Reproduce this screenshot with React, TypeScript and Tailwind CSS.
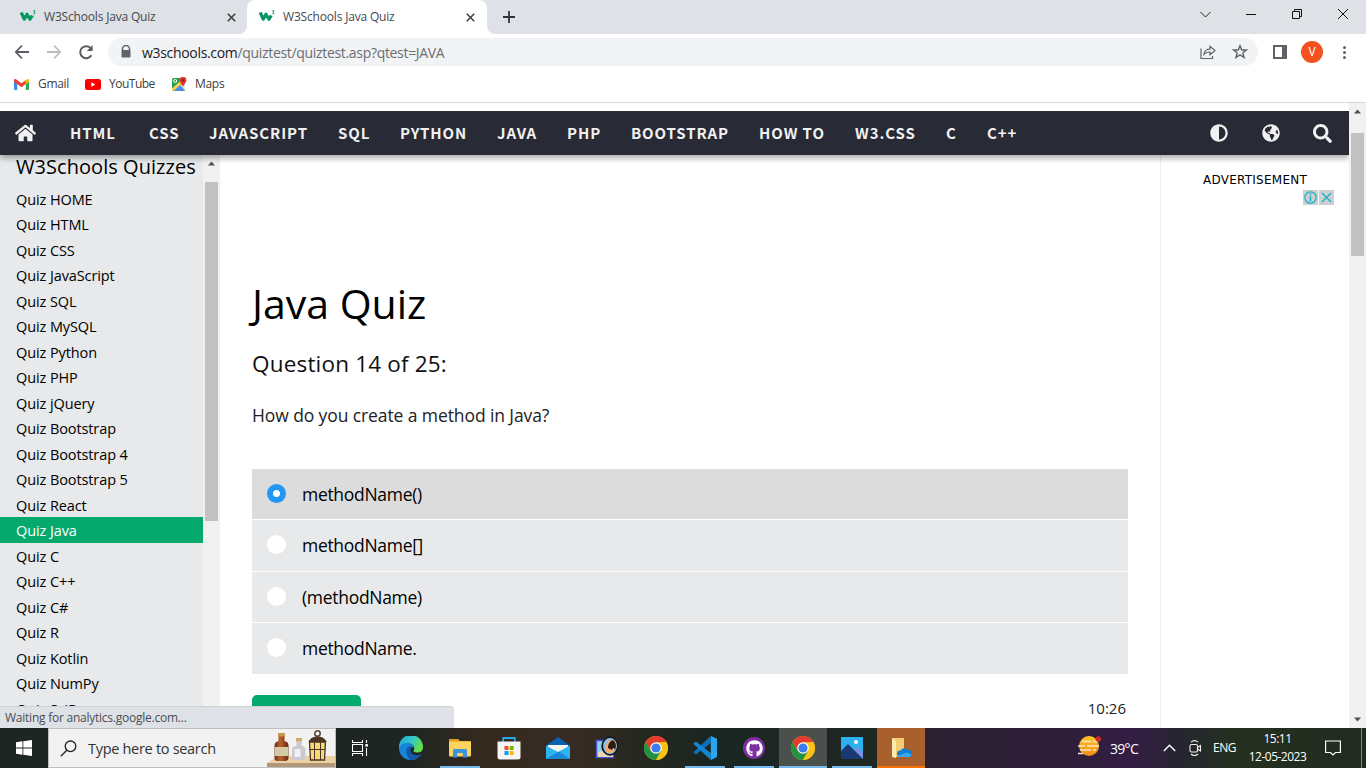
import React from "react";
import { FaHome, FaAdjust, FaGlobeAmericas, FaSearch, FaGithub } from "react-icons/fa";

const NAV: [string, string][] = [
  ["HTML", "w-[79px]"],
  ["CSS", "w-[60px]"],
  ["JAVASCRIPT", "w-[129px]"],
  ["SQL", "w-[62px]"],
  ["PYTHON", "w-[97px]"],
  ["JAVA", "w-[70px]"],
  ["PHP", "w-[64px]"],
  ["BOOTSTRAP", "w-[128px]"],
  ["HOW TO", "w-[96px]"],
  ["W3.CSS", "w-[91px]"],
  ["C", "w-[41px]"],
  ["C++", "w-[40px]"],
];

const QUIZZES = [
  "HOME", "HTML", "CSS", "JavaScript", "SQL", "MySQL", "Python", "PHP", "jQuery", "Bootstrap",
  "Bootstrap 4", "Bootstrap 5", "React", "Java", "C", "C++", "C#", "R", "Kotlin", "NumPy", "SciPy",
];

const OPTIONS: [string, string][] = [
  ["methodName()", "h-[50px] bg-[#dcdcdc]"],
  ["methodName[]", "h-[51px] bg-[#e7e9eb]"],
  ["(methodName)", "h-[50px] bg-[#e7e9eb]"],
  ["methodName.", "h-[51px] bg-[#e7e9eb]"],
];

function W3Logo() {
  return (
    <svg className="h-4 w-4 shrink-0" viewBox="0 0 16 16" fill="none" stroke="#059862">
      <path d="M1.2 3.5 4.2 10.200 7 5.200 10 10.200 12.300 6.500" strokeWidth="3.200" strokeLinejoin="round" />
      <path d="M13.200 1.800H15L14 3.200C15.600 3.200 15.500 5.300 13.200 4.900" strokeWidth=".9" />
    </svg>
  );
}

function Close() {
  return (
    <svg className="h-[9px] w-[9px] shrink-0" viewBox="0 0 9 9" stroke="#3c4043" strokeWidth="1.6">
      <path d="M.8.8 8.2 8.2M8.2.8.8 8.2" />
    </svg>
  );
}

function Tab({ active }: { active?: boolean }) {
  return (
    <div
      className={`flex h-[34px] items-center ${
        active ? "w-[240px] rounded-t-lg bg-white pl-3" : "w-[247px] rounded-br-lg bg-[#dee1e6] pl-5"
      }`}
    >
      <W3Logo />
      <span className="ml-2 w-[183px] text-[12px] tracking-[-0.18px] text-[#45494d]">W3Schools Java Quiz</span>
      <Close />
    </div>
  );
}

function TabStrip() {
  return (
    <div className="flex h-[34px] bg-white">
      <Tab />
      <div className="bg-[linear-gradient(#dee1e6_50%,#fff_50%)]">
        <Tab active />
      </div>
      <div className="flex flex-1 items-center rounded-bl-lg bg-[#dee1e6] pl-[15px]">
        <svg className="h-[14px] w-[14px]" viewBox="0 0 14 14" stroke="#303438" strokeWidth="1.8">
          <path d="M7 1v12M1 7h12" />
        </svg>
        <div className="ml-auto flex items-center pb-[6px]">
          <svg className="mr-[35px] h-3 w-[11px]" viewBox="0 0 11 12" fill="none" stroke="#222">
            <path d="M.5 4 5.5 9 10.5 4" />
          </svg>
          <svg className="mr-[36px] h-3 w-[10px]" viewBox="0 0 10 12" stroke="#111">
            <path d="M0 6.5H10" />
          </svg>
          <svg className="mr-[36px] h-3 w-[10px]" viewBox="0 0 10 12" fill="none" stroke="#111">
            <path d="M.5 3.5h7v7h-7zM2.5 3.5v-2h7v7h-2" />
          </svg>
          <svg className="mr-[18px] h-3 w-[10px]" viewBox="0 0 10 12" stroke="#111">
            <path d="M0 1 10 11M10 1 0 11" />
          </svg>
        </div>
      </div>
    </div>
  );
}

function Toolbar() {
  return (
    <div className="flex h-9 items-center bg-white pl-[14px]">
      <svg className="h-4 w-4" viewBox="0 0 16 16" fill="none" stroke="#5a5e63" strokeWidth="1.8">
        <path d="M15 8H2M8 1.5 1.8 8 8 14.5" />
      </svg>
      <svg className="ml-4 h-4 w-4" viewBox="0 0 16 16" fill="none" stroke="#babcbe" strokeWidth="1.8">
        <path d="M1 8H14M8 1.5 14.2 8 8 14.5" />
      </svg>
      <svg className="ml-4 h-4 w-4" viewBox="0 0 16 16" fill="none" stroke="#5a5e63" strokeWidth="2">
        <path d="M13.4 11.2A6 6 0 1 1 12.4 3.9L14 5.6" />
        <path d="M14.6 1v6H8.8z" fill="#5a5e63" stroke="none" />
      </svg>
      <div className="ml-[14px] flex h-7 w-[1150px] items-center rounded-full bg-[#f1f3f4] pl-3">
        <svg className="h-[14px] w-[12px]" viewBox="0 0 12 14">
          <path d="M2.500 6V4a3.500 3.500 0 0 1 7 0v2" fill="none" stroke="#5f6368" strokeWidth="1.500" />
          <rect x="1.500" y="5" width="9" height="7.500" rx="1" fill="#5f6368" />
        </svg>
        <span className="ml-[10px] text-[14px] tracking-[-0.32px] text-[#6a6e73]">
          <span className="text-[#202124]">w3schools.com</span>/quiztest/quiztest.asp?qtest=JAVA
        </span>
        <svg className="ml-auto h-4 w-4" viewBox="0 0 16 16" fill="none" stroke="#5f6368" strokeWidth="1.200">
          <path d="M1 4.500v10h11.500V12M4 10.500C4 7 7 5.200 10 5.200V2.200L15 6.500 10 10.700V8C7.500 8 5.500 8.500 4 10.500z" />
        </svg>
        <svg className="mr-[10px] ml-4 h-4 w-4" viewBox="0 0 16 16" fill="none" stroke="#5f6368" strokeWidth="1.400">
          <path d="M8 1.800 9.700 6H14.400L10.800 8.900 12.100 13.500 8 10.900 3.900 13.500 5.200 8.900 1.600 6H6.300z" />
        </svg>
      </div>
      <svg className="ml-[15px] h-[14px] w-[14px]" viewBox="0 0 14 14">
        <path d="M1 1h12v12H1z" fill="#fff" stroke="#5f6368" strokeWidth="2" />
        <path d="M9 0h5v14H9z" fill="#5f6368" />
      </svg>
      <div className="ml-[14px] flex h-[22px] w-[22px] items-center justify-center rounded-full bg-[#f4511e] text-[12px] font-medium text-white">
        V
      </div>
      <div className="ml-5 flex flex-col gap-[2px]">
        <i className="h-[3px] w-[3px] rounded-full bg-[#5f6368]" />
        <i className="h-[3px] w-[3px] rounded-full bg-[#5f6368]" />
        <i className="h-[3px] w-[3px] rounded-full bg-[#5f6368]" />
      </div>
    </div>
  );
}

function Bookmarks() {
  return (
    <div className="flex h-[33px] items-center border-b border-[#d5d7da] bg-white pb-1 pl-[14px] text-[12px] text-[#3c4043]">
      <svg className="h-[11px] w-[15px]" viewBox="0 0 15 11">
        <path d="M0 1.500 3.200 4v7H1a1 1 0 0 1-1-1z" fill="#4285f4" />
        <path d="M15 1.500 11.800 4v7H14a1 1 0 0 0 1-1z" fill="#34a853" />
        <path d="M0 2.800V1.200C0 0 1.400-.4 2.400.4L7.500 4.200 11.800 1V5L7.500 8.200z" fill="#ea4335" />
        <path d="M15 2.800V1.200C15 0 13.600-.4 12.600.4L11.800 1v4z" fill="#fbbc04" />
      </svg>
      <span className="ml-[9px] w-[40px] tracking-[-0.3px]">Gmail</span>
      <svg className="ml-[7px] h-[11px] w-[16px]" viewBox="0 0 16 11">
        <rect width="16" height="11" rx="2.500" fill="#f00" />
        <path d="M6.300 3.200v4.600L10.400 5.500z" fill="#fff" />
      </svg>
      <span className="ml-[8px] w-[56px] tracking-[-0.5px]">YouTube</span>
      <svg className="ml-[7px] h-[15px] w-[15px]" viewBox="0 0 15 15">
        <rect y="1" width="13" height="13" rx="1.500" fill="#2ba14b" />
        <path d="M1 14 8 7.500 13 13.500z" fill="#4a8af4" />
        <path d="M0 11.500 9 3.500 11 5.500 1.500 14H0z" fill="#fbd04b" />
        <path d="M8 8 13 13.500V7z" fill="#e4e6e8" />
        <circle cx="3.200" cy="4" r="1.500" fill="none" stroke="#fff" />
        <path d="M7.600 3.200a3.400 3.400 0 0 1 6.800 0C14.400 6 11.500 7 11 10.500 10.500 7 7.600 6 7.600 3.200z" fill="#e2382c" />
        <circle cx="11" cy="3.200" r="1.200" fill="#8d201a" />
      </svg>
      <span className="ml-[8px] tracking-[-0.3px]">Maps</span>
    </div>
  );
}

function Arrow({ down }: { down?: boolean }) {
  return (
    <svg className="h-[5px] w-[7px]" viewBox="0 0 7 5" fill="#505050">
      <path d={down ? "M0 .5H7L3.500 4.500z" : "M0 4.500H7L3.500.5z"} />
    </svg>
  );
}

function SiteNav() {
  return (
    <nav className="relative z-10 flex h-[44px] shrink-0 items-center bg-[#282a35] text-[#f1f1f1] shadow-[0_3px_6px_rgba(0,0,0,0.35)] [clip-path:inset(0_0_-12px_0)]">
      <FaHome className="ml-[15px] h-[22px] w-[21px]" />
      <div className="ml-[34px] flex font-['Noto_Sans_CJK_SC',sans-serif] text-[15px] leading-[44px] font-bold tracking-[0.9px] whitespace-nowrap">
        {NAV.map(([label, w]) => (
          <span key={label} className={w}>
            {label}
          </span>
        ))}
      </div>
      <FaAdjust className="ml-auto h-[18px] w-[18px]" />
      <FaGlobeAmericas className="ml-[34px] h-[18px] w-[18px]" />
      <FaSearch className="mr-[17px] ml-[33px] h-[19px] w-[19px]" />
    </nav>
  );
}

function Sidebar() {
  return (
    <>
      <aside className="w-[203px] shrink-0 overflow-hidden bg-[#e7e9eb] text-black">
        <h2 className="h-[30.500px] pl-4 text-[20px] leading-[23px] tracking-[0.05px] whitespace-nowrap">W3Schools Quizzes</h2>
        {QUIZZES.map((q) => (
          <div
            key={q}
            className={`h-[25.500px] pl-4 text-[14.500px] leading-[27px] tracking-[-0.1px] whitespace-nowrap ${
              q === "Java" ? "bg-[#04aa6d] text-white" : ""
            }`}
          >
            Quiz {q}
          </div>
        ))}
      </aside>
      <div className="flex w-[17px] shrink-0 flex-col items-center bg-[#f1f1f1] pt-[6px]">
        <Arrow />
        <div className="mt-[16px] h-[339px] w-[13px] bg-[#c1c1c1]" />
      </div>
    </>
  );
}

function Quiz() {
  return (
    <main className="w-[940px] shrink-0 overflow-hidden px-8 pt-[116px] text-black">
      <h1 className="h-[66px] text-[41px] leading-[65px] tracking-[0px]">Java Quiz</h1>
      <h3 className="mt-[9px] h-[36px] text-[22.500px] leading-[35px] tracking-[0.18px] text-[#111]">Question 14 of 25:</h3>
      <p className="mt-[19px] h-[28px] text-[17.500px] leading-[28px] tracking-[-0.1px] text-[#222]">How do you create a method in Java?</p>
      <div className="mt-[40px] flex flex-col gap-px">
        {OPTIONS.map(([text, style], i) => (
          <label key={text} className={`flex items-center pl-[15px] text-[17.500px] ${style}`}>
            <span
              className={`mb-[2px] flex h-[19px] w-[19px] items-center justify-center rounded-full ${
                i === 0 ? "bg-[#2196f3]" : "bg-white"
              }`}
            >
              <i className="h-[7px] w-[7px] rounded-full bg-white" />
            </span>
            <span className="ml-4 tracking-[-0.3px]">{text}</span>
          </label>
        ))}
      </div>
      <div className="mt-[21px] flex items-start justify-between">
        <button className="h-[40px] w-[109px] rounded-[5px] bg-[#04aa6d]" aria-label="Next" />
        <span className="mr-[2px] text-[15px] leading-[27px] tracking-[0px] text-[#222]">10:26</span>
      </div>
    </main>
  );
}

function AdColumn() {
  return (
    <aside className="flex flex-1 flex-col border-l border-[#f1f1f1] pt-[17px]">
      <span className="ml-[42px] font-['DejaVu_Sans',sans-serif] text-[12px] leading-[16px] tracking-[0.25px] text-black">ADVERTISEMENT</span>
      <div className="mt-[2px] mr-[15px] flex justify-end gap-px">
        <svg className="h-[15px] w-[15px] bg-[#cfcfcf]" viewBox="0 0 15 15" fill="none" stroke="#12b3cf">
          <circle cx="7.500" cy="7.500" r="5.700" strokeWidth="1.200" />
          <path d="M7.500 3.500v1.600M7.500 6.300v5" strokeWidth="1.600" />
        </svg>
        <svg className="h-[15px] w-[15px] bg-[#cfcfcf]" viewBox="0 0 15 15" stroke="#12b3cf" strokeWidth="1.400">
          <path d="M3 3 12 12M12 3 3 12" />
        </svg>
      </div>
    </aside>
  );
}

function Chrome() {
  return (
    <svg className="h-6 w-6" viewBox="0 0 24 24">
      <circle cx="12" cy="12" r="12" fill="#fbc116" />
      <path d="M1.600 6A12 12 0 0 1 22.400 6L12 6.500 6.800 15z" fill="#e33b2e" />
      <path d="M1.600 6A12 12 0 0 0 12 24L17.200 15 12 12 6.800 15z" fill="#229342" />
      <path d="M12 6.500H22.600A12 12 0 0 1 12 24L17.200 15z" fill="#fbc116" />
      <circle cx="12" cy="12" r="5.800" fill="#fff" />
      <circle cx="12" cy="12" r="4.600" fill="#3b7ded" />
    </svg>
  );
}

function Edge() {
  return (
    <svg className="h-6 w-6" viewBox="0 0 24 24">
      <defs>
        <linearGradient id="eg" x1="0" y1="0" x2="1" y2=".4">
          <stop offset="0" stopColor="#1fa7dd" />
          <stop offset=".55" stopColor="#31c5c7" />
          <stop offset="1" stopColor="#65dd4b" />
        </linearGradient>
      </defs>
      <path d="M0 11A12 12 0 0 1 24 11C24.300 15 21 17 17.500 16.500 14 16 14.200 15 15 13.800 16.500 10 12.500 7 8 7.500 4 8 1 10 0 13z" fill="url(#eg)" />
      <path d="M0 13C.5 9 4 7 8 7 11.500 7 14.500 9 15 12 13 10.500 10.500 10.500 9.500 12.500 8.500 17 12 22 17 23A12 12 0 0 1 0 13z" fill="#1684d8" />
      <path d="M9.500 10.800C6 13.500 6.500 19.500 11.500 24 16 24.300 20.500 22 22.700 18 20 19.300 17 19.700 14.500 18.500 11.500 17 10.800 14 12.500 11.500 12 10.500 10.500 10.300 9.500 10.800z" fill="#125ba8" />
    </svg>
  );
}

function Explorer() {
  return (
    <svg className="h-[22px] w-[22px]" viewBox="0 0 22 22">
      <path d="M0 2h9l2 2h11v4H0z" fill="#e5a11b" />
      <rect y="4.500" width="22" height="15" rx="1" fill="#fcd462" />
      <path d="M4 20.500v-7a1.500 1.500 0 0 1 1.500-1.500h11a1.500 1.500 0 0 1 1.500 1.500v7h-4.200V16H8.200v4.500z" fill="#3a93dd" />
    </svg>
  );
}

function Store() {
  return (
    <svg className="h-6 w-6" viewBox="0 0 24 24">
      <path d="M6.200 6V2h11.600v4" fill="none" stroke="#28a9e8" strokeWidth="1.800" />
      <path d="M.5 5.500h23V21a2.500 2.500 0 0 1-2.500 2.500H3A2.500 2.500 0 0 1 .5 21z" fill="#f5f5f5" />
      <path d="M7.500 10h4v4h-4z" fill="#f25022" />
      <path d="M12.700 10h4v4h-4z" fill="#7fba00" />
      <path d="M7.500 15h4v4h-4z" fill="#00a4ef" />
      <path d="M12.700 15h4v4h-4z" fill="#ffb900" />
    </svg>
  );
}

function Mail() {
  return (
    <svg className="h-6 w-6" viewBox="0 0 24 24">
      <path d="M0 9.500 12 1 24 9.500V13H0z" fill="#0960b5" />
      <path d="M2 9h20v3L12 19 2 12z" fill="#f5f5f5" />
      <path d="M0 9.500 12 16 24 9.500V23H0z" fill="#2db5f2" />
      <path d="M0 23 13 15.500 24 23z" fill="#1689d9" />
    </svg>
  );
}

function Magnifier() {
  return (
    <svg className="h-6 w-6" viewBox="0 0 24 24">
      <path d="M1.500 4.500h17v17h-17z" fill="#8fd2ec" stroke="#4a52d8" strokeWidth="1.500" />
      <path d="M3 16 10 14 18 18v3H3z" fill="#e6d9b6" />
      <ellipse cx="15" cy="10" rx="7.800" ry="8.800" fill="#8ec1dc" stroke="#101a2a" strokeWidth="1.800" />
      <path d="M12 17C9 12 11 5 17 3.500 21 4 22 9 21 12 20 15 17 18 12 17z" fill="#f1ab74" />
      <path d="M13 12C13 8 15 5 18 4 21.500 7 21.500 10 20 14 19 12 18 11 17 14z" fill="#2b1a14" />
    </svg>
  );
}

function VSCode() {
  return (
    <svg className="h-6 w-6" viewBox="0 0 24 24">
      <path d="M17.800 0 24 2.800V21L17.800 24z" fill="#2aa5ee" />
      <path d="M17.800 0V7L3 18.500.3 16.200z" fill="#0b71b9" />
      <path d="M17.800 24V17L3 5.500.3 7.800z" fill="#1188d3" />
    </svg>
  );
}

function Photos() {
  return (
    <svg className="h-[22px] w-[22px]" viewBox="0 0 22 22">
      <path d="M0 0h22v22H0z" fill="#2bb1ee" />
      <path d="M11 15 16 9.500 22 16v6H14z" fill="#7b8edf" />
      <path d="M0 14 7 7 22 22H0z" fill="#163a71" />
      <circle cx="15" cy="5" r="2.100" fill="#fff" />
    </svg>
  );
}

function CloudFolder() {
  return (
    <svg className="h-[22px] w-[22px]" viewBox="0 0 22 22">
      <path d="M2 1h12v19H2z" fill="#f2cd72" />
      <path d="M2 1 6 4v17l-4-1z" fill="#ffeab0" />
      <path d="M7 16.500A3.200 3.200 0 0 1 10.500 13.500 4.300 4.300 0 0 1 18 13.500 3.500 3.500 0 0 1 21 20H9.500C8 20 7 18.500 7 16.500z" fill="#1180d4" />
      <path d="M8 18.500 17 15.500 21.500 17.500C21.500 19 21 20 19.500 20H9.500z" fill="#35a8ef" />
    </svg>
  );
}

function SearchArt() {
  return (
    <svg className="ml-auto h-[38px] w-[68px]" viewBox="0 0 68 38">
      <defs>
        <linearGradient id="amber">
          <stop offset="0" stopColor="#6d2c12" />
          <stop offset=".4" stopColor="#b8622f" />
          <stop offset="1" stopColor="#6a2a12" />
        </linearGradient>
      </defs>
      <path d="M11 27H68v7H0z" fill="#ecd1a2" />
      <path d="M0 34H68v4H0z" fill="#b19777" />
      <path d="M11 4h7v4h-7z" fill="#c9964e" />
      <path d="M11.500 7.500h6V12c4 1 4 3 4 5v12c0 2-2 3-3 3h-8c-2 0-3-1-3-3V17c0-3 1-4 4-5z" fill="url(#amber)" />
      <path d="M7.700 18h13.500v9H7.700z" fill="#d5caa6" />
      <path d="M29 9h6v3.500h-6z" fill="#d2aa66" />
      <path d="M29.500 12h5v5c3 0 4 2 4 4v8c0 2-1 2-2 2H27c-1 0-2-1-2-2v-8c0-3 1.500-4 4.500-4z" fill="#c9cad0" />
      <path d="M27.500 20h6v8h-6z" fill="#f1f1f5" />
      <circle cx="50.500" cy="4.500" r="2.700" fill="none" stroke="#59402f" strokeWidth="1.500" />
      <path d="M41.500 13C43 9 46.500 7.500 50.500 7.500s7.500 1.500 9 5.500z" fill="#4c3525" />
      <path d="M42.500 13h16l-1 18h-14z" fill="#f5d978" stroke="#4c3525" strokeWidth="1.300" />
      <path d="M47.500 13v18M53.500 13v18M42.500 20.500h16" stroke="#4c3525" />
    </svg>
  );
}

function Slot({ children, className = "", line = "" }: { children: React.ReactNode; className?: string; line?: string }) {
  return (
    <div className={`flex h-10 w-12 shrink-0 flex-col items-center ${className}`}>
      <div className="flex flex-1 items-center">{children}</div>
      <div className={`-mt-[2px] h-[2px] ${line}`} />
    </div>
  );
}

function Taskbar() {
  const run = "w-10 bg-[#76b9ed]";
  return (
    <div className="flex h-10 shrink-0 bg-[linear-gradient(90deg,#1e2523_0%,#1e2523_30%,#35291f_35%,#362b22_42%,#25281f_47%,#1b2622_52%,#1f2723_64%,#2a2131_68%,#2e1f38_77%,#341d44_83%,#272433_86%,#24301f_90%,#232b20_100%)] text-white">
      <div className="flex w-12 items-center justify-center">
        <svg className="h-4 w-4" viewBox="0 0 16 16" fill="#fff">
          <path d="M0 2.200 6.500 1.300V7.600H0zM7.300 1.200 16 0V7.600H7.300zM0 8.400H6.500V14.700L0 13.800zM7.300 8.400H16V16L7.300 14.800z" />
        </svg>
      </div>
      <div className="flex w-[288px] items-center border border-[#bfbfbf] bg-[#f2f2f2] pl-[11px]">
        <svg className="h-[17px] w-[17px]" viewBox="0 0 17 17" fill="none" stroke="#222" strokeWidth="1.300">
          <circle cx="10.500" cy="6.300" r="5.300" />
          <path d="M6.800 10.300.8 16.300" />
        </svg>
        <span className="ml-[11px] pt-px text-[14.500px] tracking-[-0.3px] whitespace-nowrap text-[#333]">Type here to search</span>
        <SearchArt />
      </div>
      <Slot>
        <svg className="h-4 w-4" viewBox="0 0 16 16" fill="none" stroke="#fff" strokeWidth="1.100">
          <path d="M.5 0v2.500h10V0M.5 16v-2.500h10V16M.5 4.500h10v7H.5zM14.500 0v3M14.500 8v8" />
          <path d="M13.300 4h2.600v2.600h-2.600z" fill="#fff" stroke="none" />
        </svg>
      </Slot>
      <Slot className="ml-[3px]"><Edge /></Slot>
      <Slot className="ml-[1px]" line={run}><Explorer /></Slot>
      <Slot className="ml-[1px]"><Store /></Slot>
      <Slot className="ml-[1px]"><Mail /></Slot>
      <Slot className="ml-[1px]"><Magnifier /></Slot>
      <Slot className="ml-[1px]"><Chrome /></Slot>
      <Slot className="ml-[1px]" line={run}><VSCode /></Slot>
      <Slot className="ml-[1px]" line={run}>
        <div className="flex h-[22px] w-[22px] items-center justify-center rounded-full bg-[#7d2fa0]">
          <FaGithub className="h-[17px] w-[17px]" />
        </div>
      </Slot>
      <Slot className="ml-[1px] bg-[#4b504c]" line="w-12 bg-[#76b9ed]"><Chrome /></Slot>
      <Slot className="ml-[1px]" line={run}><Photos /></Slot>
      <Slot className="ml-[1px] bg-[#a9602d]" line="w-12 bg-[#f97300]"><CloudFolder /></Slot>
      <div className="ml-auto flex items-center whitespace-nowrap">
        <svg className="h-6 w-6" viewBox="0 0 24 24">
          <defs>
            <linearGradient id="sun" x1="0" y1="0" x2="0" y2="1">
              <stop offset="0" stopColor="#fdc52f" />
              <stop offset="1" stopColor="#f18a16" />
            </linearGradient>
          </defs>
          <circle cx="12" cy="10" r="10" fill="url(#sun)" />
          <path d="M5 5.500h9M16 5.500h4M1 10h7M10 10h12M3 14h11M16 14h3M1 17.500h5" stroke="#fbe6bf" strokeWidth="1.600" />
          <circle cx="21.300" cy="3" r="2.700" fill="#cf2a1f" />
        </svg>
        <span className="ml-[9px] w-[53px] text-[14px] tracking-[-0.7px]">39°C</span>
        <svg className="h-3 w-[13px]" viewBox="0 0 13 12" fill="none" stroke="#fff" strokeWidth="1.400">
          <path d="M.8 9 6.500 3.200 12.200 9" />
        </svg>
        <svg className="ml-[13px] h-4 w-[13px]" viewBox="0 0 13 16" fill="none" stroke="#eee" strokeWidth="1.100">
          <rect x="1" y="4.500" width="7.500" height="7.500" rx="1.500" />
          <path d="M8.500 7.500 11.500 5.500v5.500l-3-2M2 2.200C4 .4 7 .4 9 2.200M2 14c2 1.800 5 1.800 7 0" />
        </svg>
        <span className="ml-[11px] w-[31px] text-[12px] tracking-[-0.5px]">ENG</span>
        <div className="w-[67px] text-center text-[12px] leading-[18px] tracking-[-0.5px]">
          <div>15:11</div>
          <div>12-05-2023</div>
        </div>
        <svg className="mr-[20px] ml-[14px] h-4 w-4" viewBox="0 0 16 16" fill="none" stroke="#fff" strokeWidth="1.200">
          <path d="M.6 1h14.800v11.500H10.500L8 15 5.500 12.500H.6z" />
        </svg>
        <div className="mr-1 h-10 w-px bg-[#80857d]" />
      </div>
    </div>
  );
}

export default function App() {
  return (
    <div className="flex h-[768px] w-[1366px] flex-col overflow-hidden bg-white font-['Open_Sans','Noto_Sans',sans-serif]">
      <TabStrip />
      <Toolbar />
      <Bookmarks />
      <div className="relative flex min-h-0 flex-1">
        <div className="flex w-[1349px] shrink-0 flex-col pt-[8px]">
          <SiteNav />
          <div className="flex min-h-0 flex-1">
            <Sidebar />
            <Quiz />
            <AdColumn />
          </div>
        </div>
        <div className="flex w-[17px] flex-col items-center bg-[#f1f1f1] pt-[6px] pb-[6px]">
          <Arrow />
          <div className="mt-[19px] h-[123px] w-[13px] bg-[#c1c1c1]" />
          <div className="mt-auto flex">
            <Arrow down />
          </div>
        </div>
        <div className="absolute bottom-0 left-0 z-20 h-[22px] w-[454px] rounded-tr border-t border-[#cfd1d4] bg-[#dee1e6] pl-[5px] text-[12px] leading-[22px] tracking-[-0.24px] text-[#4a4e52]">
          Waiting for analytics.google.com...
        </div>
      </div>
      <Taskbar />
    </div>
  );
}
